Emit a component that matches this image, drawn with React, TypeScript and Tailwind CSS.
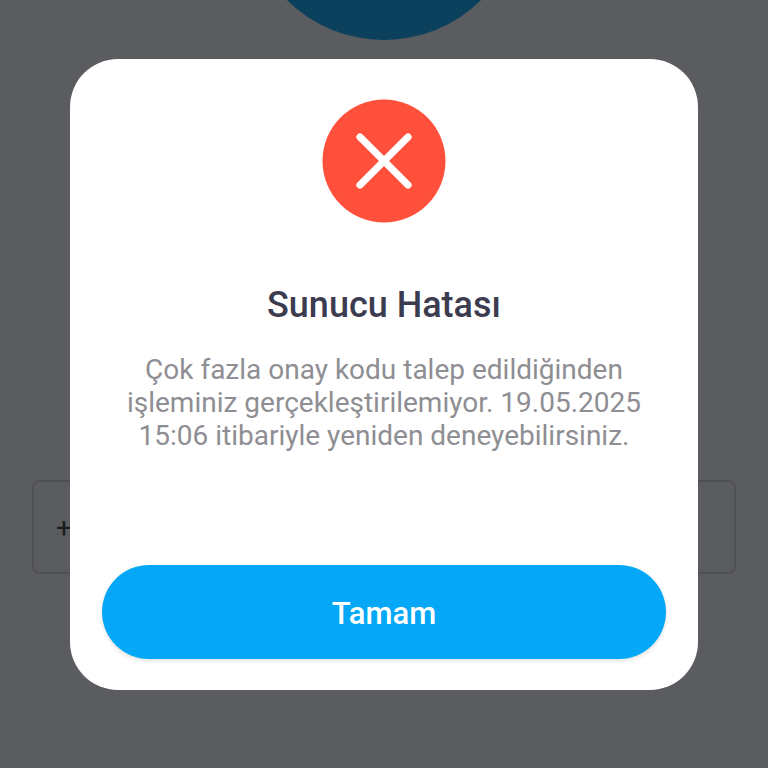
import React from 'react';

const ErrorIcon = () => (
  <svg className="h-[124px] w-[124px]" viewBox="0 0 124 124" fill="none" aria-hidden="true">
    <circle cx="62" cy="62" r="61.5" fill="#ff503b" />
    <path d="M38 38 86 86M86 38 38 86" stroke="#fff" strokeWidth="7.2" strokeLinecap="round" />
  </svg>
);

const LoginScreen = () => (
  <div className="flex min-h-screen flex-col px-8">
    {/* Only the bottom of the logo disc is in view */}
    <div className="flex h-10 items-end justify-center overflow-hidden">
      <div className="h-[276px] w-[276px] shrink-0 rounded-full bg-[#0b415c]" />
    </div>
    <input
      type="tel"
      aria-label="Telefon"
      defaultValue="+"
      className="mt-[440px] h-[94px] w-full rounded-lg border-2 border-[#505154] bg-transparent px-[22px] text-[28px] text-[#1b1c20] outline-none"
    />
  </div>
);

const App = () => {
  return (
    <div className="relative min-h-screen overflow-hidden bg-[#5b5c5f] font-['Roboto',sans-serif]">
      <LoginScreen />

      <div className="absolute inset-0 flex items-start justify-center px-[70px] pt-[59px]">
        <div
          role="alertdialog"
          aria-modal="true"
          aria-labelledby="dialog-title"
          aria-describedby="dialog-message"
          className="flex w-full flex-col items-center rounded-[48px] bg-white px-8 pt-10 pb-[31px]"
        >
          <ErrorIcon />
          <h2 id="dialog-title" className="mt-[60px] text-[36px] leading-[44px] font-medium text-[#3c3c50]">
            Sunucu Hatası
          </h2>
          <p id="dialog-message" className="mt-[26px] text-center text-[28px] leading-[33px] text-[#8e8e93]">
            Çok fazla onay kodu talep edildiğinden işleminiz gerçekleştirilemiyor. 19.05.2025 15:06
            itibariyle yeniden deneyebilirsiniz.
          </p>
          <button
            type="button"
            className="mt-[113px] h-[94px] w-full rounded-full bg-[#05a8f7] pt-1 text-[31px] font-medium text-white shadow-[0_2px_4px_rgba(0,0,0,0.12)]"
          >
            Tamam
          </button>
        </div>
      </div>
    </div>
  );
};

export default App;
